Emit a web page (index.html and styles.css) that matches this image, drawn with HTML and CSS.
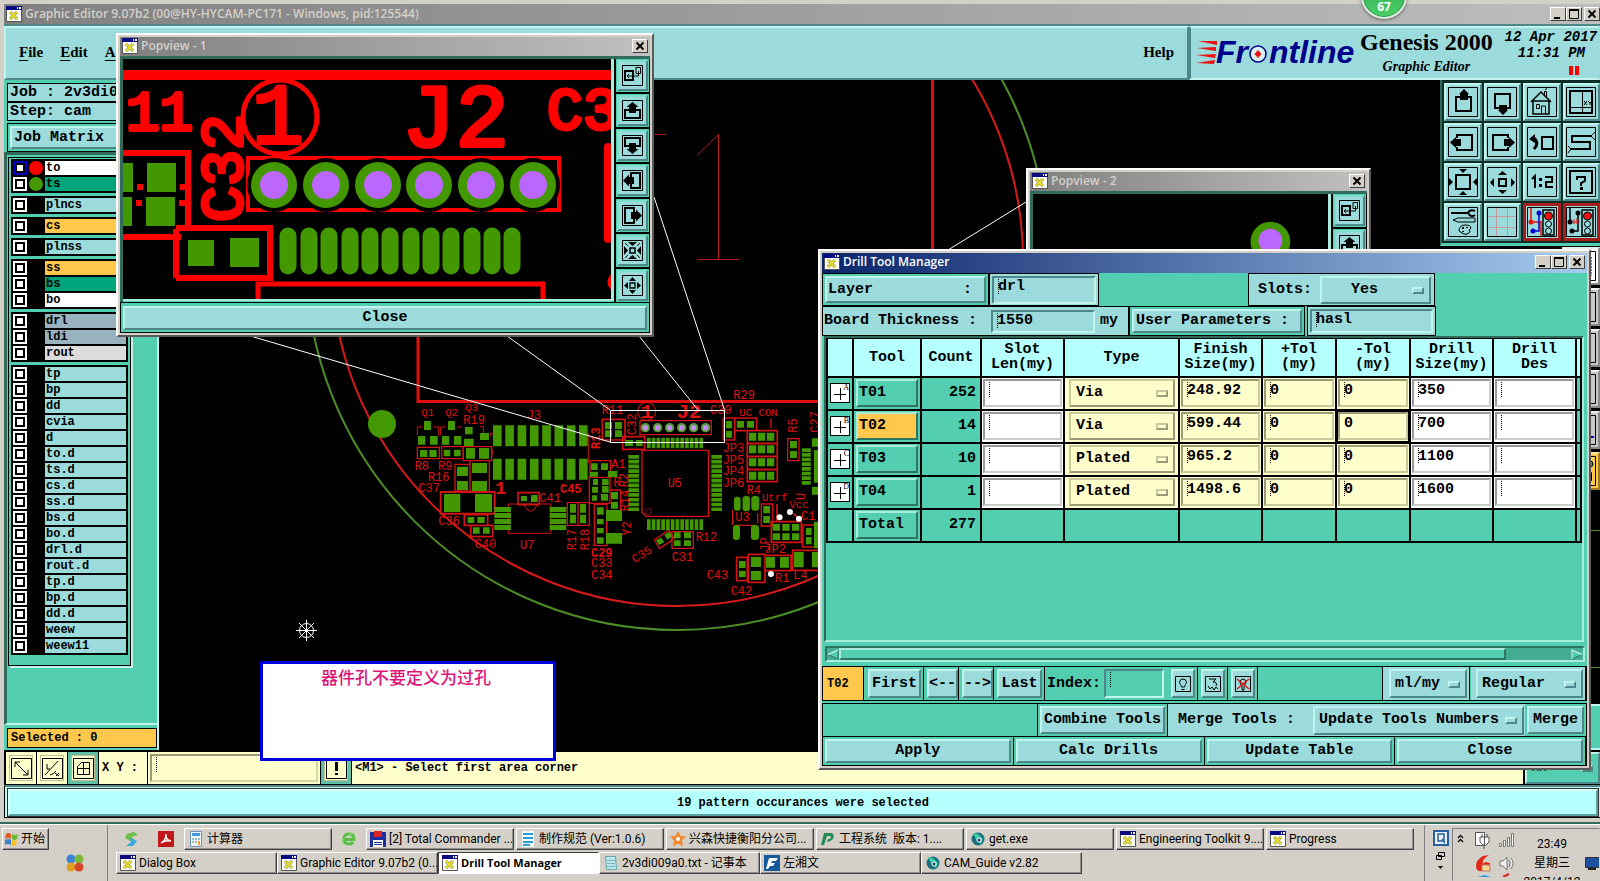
FILE: index.html
```html
<!DOCTYPE html>
<html lang="en">
<head>
<meta charset="utf-8">
<title>Graphic Editor 9.07b2</title>
<link rel="stylesheet" href="styles.css">
</head>
<body>
<svg class="defs" aria-hidden="true">
  <symbol id="xicon" viewBox="0 0 16 16"><path fill="#fff" stroke="#555" d="M.5.5h15v15H.5z"/><path fill="#0a0a80" d="M0 0h16v4H0z"/><path fill="#fff" d="M11 1h1v2h-1zM13 1h2v2h-2z"/><path stroke="#777" stroke-width="3" d="M4 6l7 7M11 6l-7 7"/><path stroke="#e8e020" stroke-width="2" d="M4 6l7 7M11 6l-7 7"/></symbol>
  <symbol id="w-min" viewBox="0 0 12 10"><path fill="#000" d="M2 8h6v2H2z"/></symbol>
  <symbol id="w-max" viewBox="0 0 12 10"><path fill="none" stroke="#000" d="M1.500 1.500h9v8h-9z"/><path fill="#000" d="M1 0h10v2H1z"/></symbol>
  <symbol id="w-close" viewBox="0 0 12 10"><path stroke="#000" stroke-width="2" d="M2.500 1.500l7 7M9.500 1.500l-7 7"/></symbol>

  <symbol id="s-swap" viewBox="0 0 21 21"><g fill="none" stroke="#000"><path d="M.5.5h20v20H.5z"/><path stroke-width="2" d="M3 6h8v9H3z"/><path d="M14 2.500h4.500v6H14zM16.500 6v5H5M7 9l-2 2 2 2"/></g></symbol>
  <symbol id="s-up" viewBox="0 0 21 21"><path fill="none" stroke="#000" d="M.5.5h20v20H.5z"/><path fill="none" stroke="#000" stroke-width="2" d="M7 10H3v8h15v-8h-4"/><path d="M10.500 2l6 5h-2.500v6H7V7H4.500z"/></symbol>
  <symbol id="s-down" viewBox="0 0 21 21"><use href="#s-up" transform="rotate(180 10.500 10.500)"/></symbol>
  <symbol id="s-left" viewBox="0 0 21 21"><path fill="none" stroke="#000" d="M.5.5h20v20H.5z"/><path fill="none" stroke="#000" stroke-width="2" d="M9 7V3h9v15H9v-4"/><path d="M1 10.500l6-6v2.500h5v7H7v2.500z"/></symbol>
  <symbol id="s-right" viewBox="0 0 21 21"><use href="#s-left" transform="rotate(180 10.500 10.500)"/></symbol>
  <symbol id="s-in" viewBox="0 0 21 21"><path fill="none" stroke="#000" d="M.5.5h20v20H.5z"/><path fill="none" stroke="#000" stroke-width="1.500" d="M8 8h5v5H8z"/><path d="M6 2h9l-4.500 4zM6 19h9l-4.500-4zM2 6v9l4-4.500zM19 6v9l-4-4.500z"/><path stroke="#000" d="M3 3l3 3M18 3l-3 3M3 18l3-3M18 18l-3-3"/></symbol>
  <symbol id="s-out" viewBox="0 0 21 21"><path fill="none" stroke="#000" d="M.5.5h20v20H.5z"/><path fill="none" stroke="#000" stroke-width="1.300" d="M8 8h5v5H8z"/><path d="M7 6h7l-3.500-4zM7 15h7l-3.500 4zM6 7v7l-4-3.500zM15 7v7l4-3.500z"/></symbol>

  <symbol id="b-up" viewBox="0 0 30 30"><path fill="none" stroke="#000" d="M.5.5h29v29H.5z"/><path fill="none" stroke="#000" stroke-width="2" d="M13 10H8v14h15V10h-4"/><path d="M16 2l5 5h-1v6h-8V7h-1z"/></symbol>
  <symbol id="b-down" viewBox="0 0 30 30"><path fill="none" stroke="#000" d="M.5.5h29v29H.5z"/><path fill="none" stroke="#000" stroke-width="2" d="M13 21H8V7h15v14h-4"/><path d="M16 28l5-5h-1v-5h-8v5h-1z"/></symbol>
  <symbol id="b-home" viewBox="0 0 30 30"><path fill="none" stroke="#000" d="M.5.5h29v29H.5z"/><path fill="none" stroke="#000" stroke-width="1.500" d="M4 15L14 5l10 10M6 14v13h16V14H6"/><path fill="none" stroke="#000" d="M14.500 27v-8h4v8M9.500 17.500h3v4h-3zM17.500 8V4.500h2V10M18 3l2-2"/></symbol>
  <symbol id="b-xy" viewBox="0 0 30 30"><path fill="none" stroke="#000" d="M.5.5h29v29H.5z"/><path fill="none" stroke="#000" stroke-width="2" d="M4 4h22v22H4z"/><path fill="none" stroke="#000" d="M16.500 4v22M4 20.500h22M18 14l3 4M21 14l-3 4M22 14l2 2 2-2M24 16v2"/></symbol>
  <symbol id="b-left" viewBox="0 0 30 30"><path fill="none" stroke="#000" d="M.5.5h29v29H.5z"/><path fill="none" stroke="#000" stroke-width="2" d="M9 11V8h15v15H9v-3"/><path d="M2 15.500l6-5.500v2h5v7H8v2z"/></symbol>
  <symbol id="b-right" viewBox="0 0 30 30"><path fill="none" stroke="#000" d="M.5.5h29v29H.5z"/><path fill="none" stroke="#000" stroke-width="2" d="M21 11V8H6v15h15v-3"/><path d="M28 15.500l-6-5.500v2h-5v7h5v2z"/></symbol>
  <symbol id="b-undo" viewBox="0 0 30 30"><path fill="none" stroke="#000" d="M.5.5h29v29H.5z"/><path fill="none" stroke="#000" stroke-width="2" d="M15 10h11v12H15z"/><path fill="none" stroke="#000" stroke-width="3" d="M5 12h3q4 5-1 10"/><path d="M2 12l6-5v9z"/></symbol>
  <symbol id="b-snake" viewBox="0 0 30 30"><path fill="none" stroke="#000" d="M.5.5h29v29H.5z"/><path fill="none" stroke="#000" stroke-width="2" d="M26 9H6v6h18v7H5"/><path fill="none" stroke="#000" d="M25 9l4-4M25 9l4 4M5 22l-3-3M5 22l-3 4"/></symbol>
  <symbol id="b-in" viewBox="0 0 30 30"><path fill="none" stroke="#000" d="M.5.5h29v29H.5z"/><path fill="none" stroke="#000" stroke-width="2" d="M8 8h14v14H8z"/><path d="M11 2h8l-4 4zM11 28h8l-4-4zM1 11v8l4-4zM29 11v8l-4-4z"/></symbol>
  <symbol id="b-out" viewBox="0 0 30 30"><path fill="none" stroke="#000" d="M.5.5h29v29H.5z"/><path fill="none" stroke="#000" stroke-width="2" d="M12 12h7v7h-7z"/><path d="M11 8h9l-4.500-4zM11 23h9l-4.500 4zM7 11v9l-4-4.500zM24 11v9l4-4.500z"/></symbol>
  <symbol id="b-half" viewBox="0 0 30 30"><path fill="none" stroke="#000" d="M.5.5h29v29H.5z"/><path fill="none" stroke="#000" stroke-width="2" d="M5 12l3-3v12M18 10h7v5h-6v5h7"/><path d="M12 11h3v3h-3zM12 17h3v3h-3z"/></symbol>
  <symbol id="b-help" viewBox="0 0 30 30"><path fill="none" stroke="#000" d="M.5.5h29v29H.5z"/><path fill="none" stroke="#000" stroke-width="2" d="M4 4h22v22H4zM11 13v-3h8v4l-4 2v3"/><path d="M14 20h3v3h-3z"/></symbol>
  <symbol id="b-tools" viewBox="0 0 30 30"><path fill="none" stroke="#000" d="M.5.5h29v29H.5z"/><path fill="none" stroke="#000" stroke-width="2" d="M3 6h16M27 4q-5-2-7 2 3 5 7 2"/><path fill="none" stroke="#000" d="M5 13l5-2h17v4H10zM11 24q0-6 6-6t6 3q-3 2-1 4-4 4-8 1z"/><path d="M14 20h2v2h-2zM18 20h2v1h-2zM14 24h2v1h-2z"/></symbol>
  <symbol id="b-grid" viewBox="0 0 30 30"><path fill="none" stroke="#000" d="M.5.5h29v29H.5z"/><path stroke="#c69a9f" d="M9.500 1v28M20.500 1v28M1 9.500h28M1 20.500h28"/></symbol>
  <symbol id="b-net1" viewBox="0 0 30 30"><path fill="none" stroke="#000" d="M.5.5h29v29H.5z"/><path fill="none" stroke="#e11" stroke-width="1.500" d="M4 1v14h10v14"/><path fill="none" stroke="#00d" stroke-width="1.500" d="M12 6v18H6"/><circle cx="12" cy="6" r="2.500" fill="#00d"/><circle cx="6" cy="24" r="2.500" fill="#00d"/><circle cx="4" cy="15" r="2.500" fill="#e11"/><path fill="#9bdbdb" stroke="#000" stroke-width="1.500" d="M16 3h11v25H16z"/><circle cx="21.500" cy="9" r="4" fill="#e11" stroke="#000"/><circle cx="21.500" cy="17" r="3" fill="none" stroke="#000"/><circle cx="21.500" cy="24" r="3" fill="none" stroke="#000"/></symbol>
  <symbol id="b-net2" viewBox="0 0 30 30"><path fill="none" stroke="#000" d="M.5.5h29v29H.5z"/><path fill="none" stroke="#000" stroke-width="1.500" d="M4 1v14M12 6v18H6"/><path fill="none" stroke="#e11" d="M4 15h10M8 12v5M11 11v6"/><circle cx="12" cy="6" r="2.500"/><circle cx="6" cy="24" r="2.500"/><circle cx="4" cy="15" r="2.500"/><path fill="#9bdbdb" stroke="#000" stroke-width="1.500" d="M16 3h11v25H16z"/><circle cx="21.500" cy="9" r="4" fill="#e11" stroke="#000"/><circle cx="21.500" cy="17" r="3" fill="none" stroke="#000"/><circle cx="21.500" cy="24" r="3" fill="none" stroke="#000"/></symbol>
  <symbol id="gecko" viewBox="0 0 16 16"><circle cx="8" cy="8" r="6.500" fill="#1b6f7c"/><path fill="#3ad0a8" d="M3 2l5 1 5 5-2 5-4-3z"/><circle cx="9" cy="9" r="2.500" fill="#eee"/><circle cx="9" cy="9" r="1.500" fill="#147"/></symbol>
</svg>

<main class="editor">
  <div class="titlebar idle">
    <svg class="ico16"><use href="#xicon"/></svg>
    <h1>Graphic Editor 9.07b2 (00@HY-HYCAM-PC171 - Windows, pid:125544)</h1>
    <button class="wbtn" aria-label="Minimize"><svg><use href="#w-min"/></svg></button>
    <button class="wbtn" aria-label="Maximize"><svg><use href="#w-max"/></svg></button>
    <button class="wbtn last" aria-label="Close"><svg><use href="#w-close"/></svg></button>
  </div>

  <header class="head">
    <nav class="menu">
      <button><u>F</u>ile</button><button><u>E</u>dit</button><button><u>A</u>ctions</button>
      <button class="help">Help</button>
    </nav>
    <div class="brand">
      <svg class="logo" viewBox="0 -8 160 44" role="img" aria-label="Frontline">
        <path fill="#e11" d="M2 3l19 0v4zM1 10l19-1v4zM0 17l20-1-1 4zM0 25l19-3-1 4z"/>
        <g fill="#00008b"><text x="20" y="25">Fr</text><text x="73" y="25">ntline</text></g>
        <circle cx="62" cy="16" r="8" fill="#d8f2f2" stroke="#00008b" stroke-width="1.500"/>
        <path fill="#e11" d="M62 12l3.500 4-3.500 4-3.500-4z"/>
      </svg>
      <div class="product"><strong>Genesis 2000</strong><em>Graphic Editor</em></div>
      <div class="clock"><span>12 Apr 2017</span><span class="hour">11:31 PM</span><svg class="pause" viewBox="0 0 10 9"><path fill="#f00" d="M0 0h4v9H0zM6 0h4v9H6z"/></svg></div>
    </div>
  </header>

  <section class="work">
    <svg class="board" viewBox="4 80 1596 673" preserveAspectRatio="xMinYMin slice" role="img" aria-label="Board layout">
      <g fill="none">
        <circle cx="677" cy="259" r="371" stroke="#4d8f26" stroke-width="2"/>
        <circle cx="677" cy="260" r="346" stroke="#d81a1a" stroke-width="2"/>
        <path stroke="#e01010" stroke-width="3" d="M418 80V401.500H932.500V80"/>
        <path stroke="#b81818" d="M697 155.500l21.500-21V259M697 259.500h42M655 134.500h11"/>
        <path stroke="#4d8f26" d="M1560 530.500h40M1560 667.500h40"/>
      </g>
      <circle cx="382" cy="424" r="14" fill="#439800"/>

      <g transform="translate(400 370) scale(.3333)">
        <g fill="none" stroke="#d01414" stroke-width="4">
          <path d="M52 232h66v34H52zM125 230h64v36h-64zM190 230h85v42h-85zM165 283h45v80h-45zM210 272h58v95h-58z"/>
          <path d="M52 195v-24h16M100 171h16v26M122 195v-24h16M172 171h14M131 212h12M272 200v-10h10M240 170h10v20M565 190v90M272 235q12 12 0 26" stroke-width="3"/>
          <path stroke-width="6" d="M122 366h162v65H122z"/>
          <path stroke-width="5" d="M354 368h64v36h-64zM193 434h70v32h-70zM212 466h66v34h-66z"/>
          <path stroke-width="3" d="M325 402h128M325 402v88h128v-88M370 402q22 44 44 0"/>
          <path d="M502 398h66v68h-66zM534 398v68M583 403h38v124h-38zM570 272h62v50h-62zM568 322h62v78h-62zM632 360h30v60M620 455v36h12"/>
          <path stroke-width="5" d="M607 148h68v62h-68zM668 200h66v38h-66z"/>
          <path stroke-width="4" d="M720 152h214v42H720z"/>
          <path d="M726 241h200v198H738l-12-12z"/>
          <circle cx="746" cy="425" r="9" stroke-width="2"/>
          <path stroke-width="5" d="M970 144h34v66h-34zM1004 144h66v38h-66zM1042 182h90v38h-90zM1042 221h90v38h-90zM1042 260h90v38h-90zM1042 299h90v36h-90z"/>
          <path d="M1163 206h34v66h-34zM1084 402h34v66h-34zM816 485h64v50h-64zM763 510l44-30 16 26-44 30zM1113 146v28M998 420v46M1008 466h60M1073 430v30"/>
          <path stroke-width="5" d="M1114 455h90v62h-90zM1208 465h50v66h-50zM1010 562h32v70h-32zM1045 553h50v84h-50zM1095 556h78v46h-78zM1178 541h80v60h-80zM1131 402v50M1180 430l20 20"/>
        </g>
        <g fill="#439800">
          <path d="M72 153h21v27H72zM144 153h21v27h-21zM54 198h22v26H54zM90 198h23v26H90zM126 198h22v26h-22zM162 198h22v26h-22zM195 171h23v22h-23zM192 206h29v22h-29zM240 189h27v21h-27z"/>
          <path d="M60 240h22v21H60zM88 240h22v21H88zM131 239h20v20h-20zM162 239h20v20h-20zM198 234h27v32h-27zM237 234h30v32h-30zM171 290h33v28h-33zM171 333h33v27h-33zM216 279h45v30h-45zM216 333h45v30h-45z"/>
          <path d="M132 372h49v54h-49zM225 372h51v54h-51zM363 378h18v16h-18zM393 375h20v21h-20zM203 441h20v18h-20zM232 441h22v18h-22zM219 472h20v19h-20zM249 472h20v19h-20z"/>
          <path d="M510 402h18v26h-18zM510 434h18v26h-18zM540 402h18v26h-18zM540 434h18v26h-18zM591 412h20v22h-20zM591 447h20v16h-20zM591 474h20v16h-20zM591 502h20v19h-20zM618 420h48v33h-48zM618 489h48v32h-48z"/>
          <path d="M573 280h20v20h-20zM603 280h21v20h-21zM570 305h24v15h-24zM624 303h28v18h-28zM579 327h15v18h-15zM606 327h20v18h-20zM576 350h18v18h-18zM606 348h20v20h-20zM576 376h15v16h-15zM603 372h21v20h-21zM633 366h21v22h-21zM633 395h21v21h-21z"/>
          <path d="M615 156h21v21h-21zM645 156h21v21h-21zM615 181h21v20h-21zM645 181h21v20h-21zM675 210h24v18h-24zM708 210h20v18h-20zM978 153h18v22h-18zM978 183h18v20h-18zM1011 153h21v20h-21zM1041 153h21v20h-21z"/>
          <path d="M1170 213h21v22h-21zM1170 243h21v21h-21zM1090 408h20v22h-20zM1090 438h20v21h-20zM822 487h20v18h-20zM852 487h21v18h-21zM822 511h20v17h-20zM852 511h21v17h-21zM768 511l16-8 9 14-16 8zM793 494l15-9 9 14-15 10z"/>
          <path d="M1017 573h20v21h-20zM1017 603h20v18h-20zM1053 561h30v30h-30zM1053 603h30v27h-30zM1098 561h27v32h-27zM1140 561h27v32h-27zM1182 546h29v46h-29zM1236 546h20v46h-20zM1218 474h17v21h-17zM1218 501h17v22h-17zM1242 455h14v80h-14zM1242 240h14v98h-14zM1236 205h20v25h-20zM1236 350h20v24h-20z"/>
          <rect x="1002" y="380" width="20" height="42" rx="9"/><rect x="1028" y="378" width="22" height="46" rx="10"/><rect x="1054" y="378" width="24" height="44" rx="10"/><rect x="999" y="465" width="21" height="45" rx="9"/><rect x="1053" y="465" width="24" height="45" rx="9"/>
        </g>
        <g fill="none" stroke="#439800">
          <path stroke-width="63" stroke-dasharray="26 10.900" d="M279 197H563M279 298H563"/>
          <path stroke-width="50" stroke-dasharray="15 3" d="M308 411v72M474 411v72"/>
          <path stroke-width="32" stroke-dasharray="11 3.300" d="M741 219h170M741 464h170M701 255v172M950 255v172"/>
          <path stroke-width="24" stroke-dasharray="22 5" d="M1047 200h78M1047 238h78M1047 277h78M1047 317h78"/>
          <path stroke-width="20" stroke-dasharray="22 7" d="M1118 472h82M1118 500h82"/>
          <path stroke-width="27" stroke-dasharray="11 3" d="M1219 235v112"/>
        </g>
        <g class="silk">
          <text x="64" y="137" class="n">Q1</text><text x="136" y="137" class="n">Q2</text><text x="196" y="123" class="n">Q3</text>
          <text x="190" y="163">R19</text><text x="380" y="147">J3</text><text x="605" y="133">R11</text><text x="930" y="133">C30</text><text x="1000" y="86">R29</text>
          <text x="1018" y="137" class="n">UC CON</text><text x="44" y="300">R8</text><text x="114" y="300">R9</text><text x="84" y="333">R16</text><text x="55" y="367">C37</text>
          <text x="480" y="369" class="b">C45</text><text x="418" y="396">C41</text><text x="115" y="465">C36</text><text x="224" y="535">C40</text><text x="360" y="538">U7</text>
          <text x="573" y="560" class="b">C29</text><text x="573" y="592">C33</text><text x="573" y="627">C34</text><text x="815" y="572">C31</text><text x="887" y="512">R12</text><text x="803" y="352">U5</text>
          <text x="968" y="247">JP3</text><text x="968" y="281">JP5</text><text x="968" y="315">JP4</text><text x="968" y="350">JP6</text><text x="1040" y="373">R4</text>
          <text x="1086" y="392" class="n">Utrf</text><text x="1168" y="413" class="n">Vcc</text><text x="1203" y="449">C1</text><text x="1006" y="453">U3</text><text x="1093" y="548">JP2</text>
          <text x="920" y="627">C43</text><text x="992" y="675">C42</text><text x="1125" y="636">R1</text><text x="1180" y="628">L4</text><text x="634" y="293">A1</text><text x="640" y="347">R</text>
          <text transform="translate(527 541) rotate(-90)">R17</text><text transform="translate(567 541) rotate(-90)">R18</text><text transform="translate(692 497) rotate(-90)">Y2</text>
          <text class="b" transform="translate(600 237) rotate(-90)">R13</text><text transform="translate(708 195) rotate(-90)">C32</text><text transform="translate(1192 188) rotate(-90)">R5</text>
          <text transform="translate(1256 188) rotate(-90)">C27</text><text transform="translate(687 424) rotate(-90)">R14</text><text transform="translate(685 352) rotate(-90)">R2</text><text transform="translate(1216 390) rotate(-90)">U</text>
          <text transform="translate(704 580) rotate(-32)">C35</text><text transform="translate(1106 545) rotate(-90)">JP</text>
          <text x="286" y="372" class="m">1</text><text x="830" y="143" class="l">J2</text><text x="722" y="143" class="l">1</text>
        </g>
        <circle cx="740" cy="124" r="27" fill="none" stroke="#e11" stroke-width="3"/>
        <g fill="#c28cff" stroke="#5b9a35" stroke-width="6"><circle cx="736" cy="173" r="11"/><circle cx="773" cy="173" r="11"/><circle cx="809" cy="173" r="11"/><circle cx="845" cy="173" r="11"/><circle cx="881" cy="173" r="11"/><circle cx="917" cy="173" r="11"/></g>
        <g fill="#fff"><circle cx="1139" cy="442" r="9"/><circle cx="1170" cy="426" r="9"/><circle cx="1197" cy="446" r="9"/><circle cx="1113" cy="612" r="9"/></g>
      </g>
      <g fill="none" stroke="#fff">
        <path d="M654 197L724.500 410M639 336L698 410M507 336L610 410M247 335L610 442M610.500 410.500h114v32h-114zM1026 202L948 250"/>
        <path d="M296 630.500h21M306.500 620v21M299 623l15 15M314 623l-15 15"/><circle cx="306.500" cy="630.500" r="7"/>
      </g>
    </svg>

    <aside class="side">
      <div class="jobinfo"><p>Job : 2v3di009a0</p><p>Step: cam</p></div>
      <div class="cell"><button class="btn matrix">Job Matrix</button></div>
      <div class="layerbox"><div class="layers">
        <div class="group">
          <label class="w"><input type="checkbox" class="cur"><i class="dot r"></i><span>to</span></label>
          <label class="g"><input type="checkbox"><i class="dot gr"></i><span>ts</span></label>
        </div>
        <div class="group"><label><input type="checkbox"><i></i><span>plncs</span></label></div>
        <div class="group"><label class="o"><input type="checkbox"><i></i><span>cs</span></label></div>
        <div class="group"><label><input type="checkbox"><i></i><span>plnss</span></label></div>
        <div class="group">
          <label class="o"><input type="checkbox"><i></i><span>ss</span></label>
          <label class="g"><input type="checkbox"><i></i><span>bs</span></label>
          <label class="w"><input type="checkbox"><i></i><span>bo</span></label>
        </div>
        <div class="group">
          <label class="s"><input type="checkbox"><i></i><span>drl</span></label>
          <label class="s"><input type="checkbox"><i></i><span>ldi</span></label>
          <label class="l"><input type="checkbox"><i></i><span>rout</span></label>
        </div>
        <div class="group">
          <label><input type="checkbox"><i></i><span>tp</span></label>
          <label><input type="checkbox"><i></i><span>bp</span></label>
          <label><input type="checkbox"><i></i><span>dd</span></label>
          <label><input type="checkbox"><i></i><span>cvia</span></label>
          <label><input type="checkbox"><i></i><span>d</span></label>
          <label><input type="checkbox"><i></i><span>to.d</span></label>
          <label><input type="checkbox"><i></i><span>ts.d</span></label>
          <label><input type="checkbox"><i></i><span>cs.d</span></label>
          <label><input type="checkbox"><i></i><span>ss.d</span></label>
          <label><input type="checkbox"><i></i><span>bs.d</span></label>
          <label><input type="checkbox"><i></i><span>bo.d</span></label>
          <label><input type="checkbox"><i></i><span>drl.d</span></label>
          <label><input type="checkbox"><i></i><span>rout.d</span></label>
          <label><input type="checkbox"><i></i><span>tp.d</span></label>
          <label><input type="checkbox"><i></i><span>bp.d</span></label>
          <label><input type="checkbox"><i></i><span>dd.d</span></label>
          <label><input type="checkbox"><i></i><span>weew</span></label>
          <label><input type="checkbox"><i></i><span>weew11</span></label>
        </div>
      </div></div>
      <p class="selected">Selected : 0</p>
    </aside>

    <aside class="tools">
      <div class="toolgrid">
        <button aria-label="Pan up"><svg><use href="#b-up"/></svg></button><button aria-label="Pan down"><svg><use href="#b-down"/></svg></button><button aria-label="Home"><svg><use href="#b-home"/></svg></button><button aria-label="Coordinates"><svg><use href="#b-xy"/></svg></button>
        <button aria-label="Pan left"><svg><use href="#b-left"/></svg></button><button aria-label="Pan right"><svg><use href="#b-right"/></svg></button><button aria-label="Previous view"><svg><use href="#b-undo"/></svg></button><button aria-label="Serpentine"><svg><use href="#b-snake"/></svg></button>
        <button aria-label="Zoom in"><svg><use href="#b-in"/></svg></button><button aria-label="Zoom out"><svg><use href="#b-out"/></svg></button><button aria-label="Scale 1:2"><svg><use href="#b-half"/></svg></button><button aria-label="Help"><svg><use href="#b-help"/></svg></button>
        <button aria-label="Setup"><svg><use href="#b-tools"/></svg></button><button aria-label="Grid"><svg><use href="#b-grid"/></svg></button><button class="hot" aria-label="Nets on"><svg><use href="#b-net1"/></svg></button><button class="hot" aria-label="Nets off"><svg><use href="#b-net2"/></svg></button>
      </div>
      <div class="toolcol">
        <button class="wh" aria-label="Select"><svg viewBox="0 0 30 30"><path fill="none" stroke="#000" d="M.5.5h29v29H.5z"/><path fill="none" stroke="#000" stroke-dasharray="2 1" d="M5 5h20v20H5z"/></svg></button>
        <button aria-label="Add"><svg viewBox="0 0 30 30"><path fill="none" stroke="#000" d="M.5.5h29v29H.5z"/><circle cx="20" cy="10" r="5" fill="#e11"/></svg></button>
        <button aria-label="Copy"><svg viewBox="0 0 30 30"><path fill="none" stroke="#000" d="M.5.5h29v29H.5z"/><path fill="#e11" d="M5 10h20v3H5zM5 18h20v3H5z"/></svg></button>
        <button aria-label="Move"><svg viewBox="0 0 30 30"><path fill="none" stroke="#000" d="M.5.5h29v29H.5z"/><path fill="#00c" d="M10 14h14v12H10z"/></svg></button>
        <button aria-label="Mirror"><svg viewBox="0 0 30 30"><path fill="none" stroke="#000" d="M.5.5h29v29H.5z"/><path fill="#00c" d="M14 21h14v2H14zM20 17l-4 5 4 4z"/></svg></button>
        <button class="or" aria-label="Query"><svg viewBox="0 0 30 30"><path fill="none" stroke="#000" d="M.5.5h29v29H.5z"/><circle cx="24" cy="8" r="3" fill="#3a3" stroke="#000"/><path d="M20 20l6-4v10l-2-4z"/></svg></button>
      </div>
      <div class="corner"></div>
    </aside>
  </section>

  <div class="cmd">
    <button class="cbtn" aria-label="Absolute"><svg viewBox="0 0 21 21"><path fill="none" stroke="#000" d="M.5.5h20v20H.5zM4 4l13 13M4 9V4h5M17 12v5h-5"/></svg></button>
    <button class="cbtn" aria-label="Relative"><svg viewBox="0 0 21 21"><path fill="none" stroke="#000" d="M.5.5h20v20H.5zM3 17L16 3M5 6v5h3M8 17q4-1 6-4M13 15l4 3M17 15l-3 3"/></svg></button>
    <button class="cbtn on" aria-label="Snap grid"><svg viewBox="0 0 21 21"><path fill="none" stroke="#000" d="M.5.5h20v20H.5zM4.500 8.500l4-4h8v12h-12zM10.500 4v13M4 10.500h13"/></svg></button>
    <label class="xy" for="xy">X Y :</label>
    <span class="xyin"><input id="xy" class="tin"></span>
    <button class="cbtn on bang" aria-label="Execute"><svg viewBox="0 0 21 21"><path fill="none" stroke="#000" d="M.5.5h20v20H.5z"/><path d="M9 4h3v9H9zM9 15h3v2H9z"/></svg></button>
    <p class="msg">&lt;M1&gt; - Select first area corner</p>
    <span class="unit sel"><select aria-label="Units"><option>MM</option></select></span>
  </div>
  <div class="status"><p>19 pattern occurances were selected</p></div>
</main>

<section class="win pop1">
  <div class="titlebar idle light"><svg class="ico16"><use href="#xicon"/></svg><h2>Popview - 1</h2><button class="wbtn" aria-label="Close"><svg><use href="#w-close"/></svg></button></div>
  <div class="popbody">
    <svg class="view" viewBox="123 59 488 242" preserveAspectRatio="xMinYMin slice" role="img" aria-label="Magnified view of J2">
      <rect x="123" y="70" width="488" height="10" fill="red"/>
      <g class="big">
        <text x="126" y="130" font-size="56">11</text><text x="252" y="143" font-size="86">1</text>
        <text x="402" y="146" font-size="89">J2</text><text x="547" y="129" font-size="60">C3</text>
        <text transform="translate(242 222) rotate(-90)" font-size="60">C32</text>
      </g>
      <g fill="none" stroke="red">
        <circle cx="280" cy="117" r="37" stroke-width="5"/>
        <path stroke-width="6" d="M123 153h65v78M123 237h58M176 229v49M176 278h94v-50h-94"/>
        <path stroke-width="5" d="M258 300v-16h285v16"/>
        <path stroke-width="4" d="M248 158h311v52H248z"/>
        <path stroke-width="8" stroke-linecap="round" d="M608 147v92"/><path stroke-width="4" d="M612 276q-5 6 0 12"/>
      </g>
      <path fill="red" d="M137 184h6v6h-6zM136 200h6v6h-6zM180 184h6v6h-6zM179 200h6v6h-6z"/>
      <path fill="#439800" d="M123 163h10v29h-10zM147 163h29v29h-29zM123 197h9v29h-9zM146 197h29v29h-29zM188 240h26v26h-26zM230 238h29v29h-29z"/>
      <g fill="#439800" stroke="#000" stroke-width="4"><circle cx="274" cy="185" r="25"/><circle cx="326" cy="185" r="25"/><circle cx="378" cy="185" r="25"/><circle cx="429" cy="185" r="25"/><circle cx="481" cy="185" r="25"/><circle cx="533" cy="185" r="25"/></g>
      <g fill="#bb66ff"><circle cx="274" cy="185" r="14"/><circle cx="326" cy="185" r="14"/><circle cx="378" cy="185" r="14"/><circle cx="429" cy="185" r="14"/><circle cx="481" cy="185" r="14"/><circle cx="533" cy="185" r="14"/></g>
      <path stroke="#439800" stroke-width="17" stroke-linecap="round" d="M288 236v30M309 236v30M329 236v30M350 236v30M370 236v30M390 236v30M411 236v30M431 236v30M451 236v30M472 236v30M492 236v30M512 236v30"/>
    </svg>
    <div class="poptools">
      <button aria-label="Swap view"><svg><use href="#s-swap"/></svg></button><button aria-label="Pan up"><svg><use href="#s-up"/></svg></button><button aria-label="Pan down"><svg><use href="#s-down"/></svg></button><button aria-label="Pan left"><svg><use href="#s-left"/></svg></button><button aria-label="Pan right"><svg><use href="#s-right"/></svg></button><button aria-label="Zoom in"><svg><use href="#s-in"/></svg></button><button aria-label="Zoom out"><svg><use href="#s-out"/></svg></button>
    </div>
  </div>
  <div class="cell"><button class="btn">Close</button></div>
</section>

<section class="win pop2">
  <div class="titlebar idle light"><svg class="ico16"><use href="#xicon"/></svg><h2>Popview - 2</h2><button class="wbtn" aria-label="Close"><svg><use href="#w-close"/></svg></button></div>
  <div class="popbody">
    <svg class="view" viewBox="1032 195 297 200" preserveAspectRatio="xMinYMin slice" role="img" aria-label="Magnified pad"><circle cx="1271" cy="243" r="20" fill="#439800"/><circle cx="1271" cy="242" r="12" fill="#bb66ff"/></svg>
    <div class="poptools"><button aria-label="Swap view"><svg><use href="#s-swap"/></svg></button><button aria-label="Pan up"><svg><use href="#s-up"/></svg></button><button aria-label="Pan down"><svg><use href="#s-down"/></svg></button></div>
  </div>
</section>

<section class="win drill">
  <div class="titlebar active"><svg class="ico16"><use href="#xicon"/></svg><h2>Drill Tool Manager</h2>
    <button class="wbtn" aria-label="Minimize"><svg><use href="#w-min"/></svg></button><button class="wbtn" aria-label="Maximize"><svg><use href="#w-max"/></svg></button><button class="wbtn last" aria-label="Close"><svg><use href="#w-close"/></svg></button></div>
  <div class="form">
    <div class="frow">
      <div class="cell layer"><button class="btn between"><span>Layer</span><span>:</span></button></div>
      <div class="pcell fld1"><input class="tin" aria-label="Layer" value="drl"></div>
      <div class="pcell slots"><label for="slots">Slots:</label><span class="sel"><select id="slots"><option>Yes</option><option>No</option></select></span></div>
    </div>
    <div class="frow r2">
      <div class="pcell thick"><label for="bt">Board Thickness :</label><input id="bt" class="tin" value="1550"><span>my</span></div>
      <div class="cell params"><button class="btn">User Parameters :</button></div>
      <div class="pcell fld2"><input class="tin" aria-label="User Parameters" value="hasl"></div>
    </div>
  </div>
  <div class="tablebox">
    <table>
      <colgroup><col class="c0"><col class="c1"><col class="c2"><col class="c3"><col class="c4"><col class="c3"><col class="c5"><col class="c5"><col class="c3"><col class="c3"><col></colgroup>
      <thead><tr><th></th><th>Tool</th><th>Count</th><th>Slot<br>Len(my)</th><th>Type</th><th>Finish<br>Size(my)</th><th>+Tol<br>(my)</th><th>-Tol<br>(my)</th><th>Drill<br>Size(my)</th><th>Drill<br>Des</th><th></th></tr></thead>
      <tbody>
        <tr><td><span class="mark">A</span></td><td><button class="tbtn">T01</button></td><td class="num">252</td><td class="wt"><input class="tin" aria-label="Slot length T01"></td><td class="ye"><span class="sel"><select aria-label="Type T01"><option>Via</option></select></span></td><td class="ye"><input class="tin" aria-label="Finish T01" value="248.92"></td><td class="ye"><input class="tin" aria-label="Plus T01" value="0"></td><td class="ye"><input class="tin" aria-label="Minus T01" value="0"></td><td class="wt"><input class="tin" aria-label="Drill T01" value="350"></td><td class="wt"><input class="tin" aria-label="Des T01"></td><td></td></tr>
        <tr><td><span class="mark">B</span></td><td><button class="tbtn cur">T02</button></td><td class="num">14</td><td class="wt"><input class="tin" aria-label="Slot length T02"></td><td class="ye"><span class="sel"><select aria-label="Type T02"><option>Via</option></select></span></td><td class="ye"><input class="tin" aria-label="Finish T02" value="599.44"></td><td class="ye"><input class="tin" aria-label="Plus T02" value="0"></td><td class="ye focus"><input class="tin" aria-label="Minus T02" value="0"></td><td class="wt"><input class="tin" aria-label="Drill T02" value="700"></td><td class="wt"><input class="tin" aria-label="Des T02"></td><td></td></tr>
        <tr><td><span class="mark">C</span></td><td><button class="tbtn">T03</button></td><td class="num">10</td><td class="wt"><input class="tin" aria-label="Slot length T03"></td><td class="ye"><span class="sel"><select aria-label="Type T03"><option>Plated</option></select></span></td><td class="ye"><input class="tin" aria-label="Finish T03" value="965.2"></td><td class="ye"><input class="tin" aria-label="Plus T03" value="0"></td><td class="ye"><input class="tin" aria-label="Minus T03" value="0"></td><td class="wt"><input class="tin" aria-label="Drill T03" value="1100"></td><td class="wt"><input class="tin" aria-label="Des T03"></td><td></td></tr>
        <tr><td><span class="mark">D</span></td><td><button class="tbtn">T04</button></td><td class="num">1</td><td class="wt"><input class="tin" aria-label="Slot length T04"></td><td class="ye"><span class="sel"><select aria-label="Type T04"><option>Plated</option></select></span></td><td class="ye"><input class="tin" aria-label="Finish T04" value="1498.6"></td><td class="ye"><input class="tin" aria-label="Plus T04" value="0"></td><td class="ye"><input class="tin" aria-label="Minus T04" value="0"></td><td class="wt"><input class="tin" aria-label="Drill T04" value="1600"></td><td class="wt"><input class="tin" aria-label="Des T04"></td><td></td></tr>
        <tr><td></td><td><button class="tbtn">Total</button></td><td class="num">277</td><td></td><td></td><td></td><td></td><td></td><td></td><td></td><td></td></tr>
      </tbody>
    </table>
  </div>
  <div class="scroll"><svg viewBox="0 0 12 11"><path fill="#54ceb0" stroke="#2e7561" d="M11 1v9L1 5.500z"/><path fill="none" stroke="#a8ecdc" stroke-width="1.500" d="M11 1L1 5.500"/></svg><span class="thumb"></span><span class="gap"></span><svg viewBox="0 0 12 11"><path fill="#54ceb0" stroke="#2e7561" d="M1 10V1l10 4.500z"/><path fill="none" stroke="#a8ecdc" stroke-width="1.500" d="M1 10V1l10 4.500"/></svg></div>
  <div class="nav">
    <span class="curtool">T02</span>
    <div class="cell n1"><button class="btn">First</button></div><div class="cell n2"><button class="btn">&lt;--</button></div><div class="cell n2"><button class="btn">--&gt;</button></div><div class="cell n3"><button class="btn">Last</button></div>
    <label class="index" for="idx">Index:</label><input id="idx" class="tin idx">
    <div class="cell n4"><button class="btn" aria-label="Highlight"><svg viewBox="0 0 16 16"><path fill="none" stroke="#000" d="M.5.5h15v15H.5zM6.500 11c0-2-2-3-2-5q.5-3 3.500-3t3.500 3c0 2-2 3-2 5zM6.500 13.500h3"/></svg></button></div>
    <div class="cell n4"><button class="btn" aria-label="Zoom to"><svg viewBox="0 0 16 16"><path fill="none" stroke="#000" d="M.5.5h15v15H.5zM4 3h7l-3 3h2q3 2 1 4M3 10l2 3 2-2 2 3 2-3 2 2"/></svg></button></div>
    <div class="cell n4"><button class="btn" aria-label="Delete"><svg viewBox="0 0 16 16"><path fill="none" stroke="#000" d="M.5.5h15v15H.5zM5 7q0-4 3-4t3 4l-2 3v4H7v-4z"/><path stroke="#e11" stroke-width="1.500" d="M2 3l12 10M14 3L2 13"/></svg></button></div>
    <div class="pcell mlmy"><span class="sel"><select aria-label="Units"><option>ml/my</option></select></span></div>
    <div class="pcell reg"><span class="sel"><select aria-label="Mode"><option>Regular</option></select></span></div>
  </div>
  <div class="mergebar">
    <div class="cell comb"><button class="btn">Combine Tools</button></div>
    <div class="pcell merge"><label for="mt">Merge Tools :</label><span class="sel"><select id="mt"><option>Update Tools Numbers</option></select></span><div class="mb"><button class="btn">Merge</button></div></div>
  </div>
  <div class="actions"><div class="cell"><button class="btn">Apply</button></div><div class="cell"><button class="btn">Calc Drills</button></div><div class="cell"><button class="btn">Update Table</button></div><div class="cell"><button class="btn">Close</button></div></div>
</section>

<div class="note" lang="zh">器件孔不要定义为过孔</div>
<div class="badge">67</div>

<footer class="taskbar">
  <div class="startcol">
    <button class="task start"><svg class="ico16" viewBox="0 0 16 16"><path fill="#e55a24" d="M2 3q3-2 5 0v5Q5 6 1 8z"/><path fill="#6fb52c" d="M8 3q3 2 6 0l-1 5q-3 2-5 0z"/><path fill="#3a7fd0" d="M1 9q4-2 6 0v5q-3-2-6 0z"/><path fill="#f4c21c" d="M8 9q3 2 5 0l-1 5q-2 2-4 0z"/></svg>开始</button>
    <svg class="clover" viewBox="0 0 18 18"><circle cx="5" cy="5" r="4.500" fill="#3b86d8"/><circle cx="13" cy="5" r="4.500" fill="#7ab83a"/><circle cx="5" cy="13" r="4.500" fill="#e0a022"/><circle cx="13" cy="13" r="4.500" fill="#d8472a"/></svg>
  </div>
  <div class="tasks">
    <div class="trow">
      <svg class="solo" viewBox="0 0 16 16"><path fill="#6cc04a" d="M3 3l7-2 4 3-7 2 4 3-3 2-7-4z"/><path fill="#3aa6dd" d="M6 7l7 3-4 5H2l5-4z"/></svg>
      <svg class="solo gap1" viewBox="0 0 16 16"><path fill="#c01818" d="M0 0h16v16H0z"/><path fill="none" stroke="#fff" stroke-width="1.500" d="M3 12q5-2 5-9-1 6 5 7-6-1-10 2"/></svg>
      <button class="task"><svg class="ico16" viewBox="0 0 16 16"><path fill="#eef4fb" stroke="#6b93bd" d="M2.500.5h11v15h-11z"/><path fill="#3f9bdc" d="M4 2h8v3H4z"/><path fill="#9bb" d="M4 7h2v2H4zM7 7h2v2H7zM10 7h2v2h-2zM4 10h2v2H4zM7 10h2v2H7z"/><path fill="#e93" d="M10 10h2v4h-2z"/></svg>计算器</button>
      <svg class="solo gap2" viewBox="0 0 16 16"><path fill="none" stroke="#55c043" stroke-width="3" d="M4 8.500h9Q13 3 8 3T3 8t5 5q3 0 4-2"/><path fill="none" stroke="#8fd67c" d="M1 13Q2 4 14 2"/></svg>
      <button class="task"><svg class="ico16" viewBox="0 0 16 16"><path fill="#1c2fa0" d="M0 1h16v15H0z"/><path fill="#fff" d="M3 9h10v7H3z"/><path fill="#d22" d="M4 0h8v6H4z"/><path stroke="#1c2fa0" d="M4 11.500h8M4 13.500h8"/></svg>[2] Total Commander ...</button>
      <button class="task"><svg class="ico16" viewBox="0 0 16 16"><path fill="#f4fbff" d="M2 0h12v16H2z"/><path stroke="#2a9fd6" stroke-width="2" d="M3 3h10M3 7h10M3 11h10M3 14h7"/></svg>制作规范 (Ver:1.0.6)</button>
      <button class="task"><svg class="ico16" viewBox="0 0 16 16"><path fill="#f0872a" d="M8 0l2.500 5 5.500.5-4 4 1 6-5-3-5 3 1-6-4-4L5.500 5z"/><circle cx="8" cy="8" r="2" fill="#fff"/></svg>兴森快捷衡阳分公司...</button>
      <button class="task"><svg class="ico16" viewBox="0 0 16 16"><path fill="#238a55" d="M4 2h8q3 2 1 6-3 3-6 3l1-3h2l1-3H7L4 14H1z"/></svg>工程系统&nbsp; 版本: 1....</button>
      <button class="task"><svg class="ico16"><use href="#gecko"/></svg>get.exe</button>
      <button class="task"><svg class="ico16"><use href="#xicon"/></svg>Engineering Toolkit 9....</button>
      <button class="task"><svg class="ico16"><use href="#xicon"/></svg>Progress</button>
    </div>
    <div class="trow second">
      <button class="task"><svg class="ico16"><use href="#xicon"/></svg>Dialog Box</button>
      <button class="task"><svg class="ico16"><use href="#xicon"/></svg>Graphic Editor 9.07b2 (0...</button>
      <button class="task cur"><svg class="ico16"><use href="#xicon"/></svg>Drill Tool Manager</button>
      <button class="task"><svg class="ico16" viewBox="0 0 16 16"><path fill="#bfe6ee" stroke="#6aa" d="M2.500 1.500h10l1 13h-10z"/><path stroke="#7bb" d="M4 5.500h8M4 8.500h8M4 11.500h8"/></svg>2v3di009a0.txt - 记事本</button>
      <button class="task"><svg class="ico16" viewBox="0 0 16 16"><path fill="#15589c" d="M0 0h16v16H0z"/><path fill="#fff" d="M5 3h9l-2 3H8l-1 2h4l-2 3H6l-2 3H2z"/></svg>左湘文</button>
      <button class="task"><svg class="ico16"><use href="#gecko"/></svg>CAM_Guide v2.82</button>
    </div>
  </div>
  <div class="lang"><svg viewBox="0 0 16 16"><path fill="#e8f2fc" stroke="#2a5f9e" stroke-width="2" d="M1 1h14v14H1z"/><path fill="none" stroke="#2a5f9e" stroke-width="1.500" d="M5 4h6v7H5zM9 9l3 4"/></svg><svg class="sm" viewBox="0 0 9 18"><path fill="none" stroke="#000" d="M2.500.5h6v4h-6zM.5 3.500h5v4h-5z"/><path d="M2 14h5l-2.500 3z"/></svg></div>
  <div class="tray">
    <svg class="icons" viewBox="0 0 64 48">
      <path fill="none" stroke="#000" stroke-width="1.300" d="M3 9l2.500-2.500L8 9M3 13l2.500-2.500L8 13"/>
      <path fill="#fff" stroke="#555" d="M20.500 3.500h9v13h-9zM25 8h9v5l-3 3h-3l-3-3zM27 5v3M32 5v3M29 16v4"/>
      <path fill="#fff" stroke="#777" d="M44.500 14.500h2v3h-2zM48.500 11.500h2v6h-2zM52.500 8.500h2v9h-2zM56.500 4.500h2v13h-2z"/>
      <path fill="#e22718" d="M34 26l-6 1q-7 4-7 10t6 5l8-1v-7l-5-1-2 2q-2-4 6-9z"/><path fill="#f8d98a" stroke="#b77" d="M27 36h8v6h-8z"/>
      <path fill="#eee" stroke="#777" d="M45 32h3l4-4v13l-4-4h-3zM54 31q2 3 0 7M56 29q4 5 0 11"/>
      <path fill="#2a9de8" d="M22 48l8-2 6 2z"/><path stroke="#d22" stroke-width="2" d="M48 48l6-3"/>
    </svg>
    <div class="time"><span>23:49</span><span>星期三</span><span>2017/4/12</span></div>
    <svg class="desk" viewBox="0 0 14 14"><path fill="#1c4fa0" stroke="#333" d="M.5.5h15v10H.5z"/><path fill="#222" d="M3 11h8v2H3z"/></svg>
  </div>
</footer>
</body>
</html>
```
FILE: styles.css
```css
:root {
  --teal: #54ceb0;
  --pale: #9bdbdb;
  --hi: #c2f4ee;
  --lo: #4d8787;
  --deep: #2f6a5a;
  --cream: #ffffcc;
  --amber: #ffc84d;
  --gray: #d4d0c8;
  --mono: "Liberation Mono", monospace;
  --ui: Roboto, "Noto Sans CJK SC", sans-serif;
}
*, *::after { box-sizing: border-box; }
body {
  margin: 0;
  height: 100vh;
  display: flex;
  flex-direction: column;
  overflow: hidden;
  background: #000;
  font: bold 15px/16px var(--mono);
  color: #000;
}
p, h1, h2 { margin: 0; font-size: inherit; font-weight: inherit; }
button, input, select { font: inherit; color: inherit; margin: 0; padding: 0; border-radius: 0; }
select { appearance: none; }
svg { display: block; }
.defs { position: absolute; width: 0; height: 0; }
.ico16 { width: 16px; height: 16px; flex: none; }

/* title bars */
.titlebar {
  display: flex;
  align-items: center;
  height: 20px;
  flex: none;
  padding: 0 2px 1px;
  font: 600 12px/18px "Open Sans", sans-serif;
  color: #d4d0c8;
}
.titlebar h1, .titlebar h2 { flex: 1; margin-left: 3px; white-space: nowrap; }
.idle { background: linear-gradient(90deg, #808080, #bebebe); }
.active { background: linear-gradient(90deg, #0a246a, #a6caf0); color: #fff; }
.wbtn {
  width: 16px;
  height: 14px;
  background: var(--gray);
  border: 1px solid;
  border-color: #fff #404040 #404040 #fff;
  display: grid;
  place-items: center;
}
.wbtn svg { width: 12px; height: 10px; }
.wbtn.last { margin-left: 2px; }

/* raised Motif controls */
.cell { border: 1px solid #000; background: var(--teal); padding: 2px; display: flex; }
.btn {
  flex: 1;
  border: 2px solid;
  border-color: var(--hi) var(--lo) var(--lo) var(--hi);
  background: var(--pale);
  display: flex;
  align-items: center;
  justify-content: center;
  white-space: nowrap;
}
.pcell { border: 1px solid #000; background: var(--pale); padding: 3px; display: flex; align-items: center; }
.tin {
  width: 100%;
  min-width: 0;
  border: 2px solid;
  border-color: var(--lo) var(--hi) var(--hi) var(--lo);
  background: repeating-linear-gradient(#000 0 1px, transparent 1px 2px) 4px 1px / 1px 15px no-repeat;
  padding: 0 0 6px 4px;
  outline: none;
  vertical-align: top;
}
.sel {
  position: relative;
  display: flex;
  border: 2px solid;
  border-color: var(--hi) var(--lo) var(--lo) var(--hi);
  background: inherit;
}
.sel select { flex: 1; width: 100%; border: 0; background: none; padding-left: 5px; outline: none; }
.sel::after {
  content: "";
  position: absolute;
  right: 5px;
  top: calc(50% - 3px);
  width: 12px;
  height: 7px;
  border: 2px solid;
  border-color: var(--hi) var(--lo) var(--lo) var(--hi);
  pointer-events: none;
}

/* main editor */
.editor { flex: 1; min-height: 0; display: flex; flex-direction: column; padding: 4px 0 4px 4px; background: var(--gray); border-bottom: 2px solid var(--deep); }
.editor > .titlebar { padding-right: 0; }
.head { display: flex; height: 56px; flex: none; border-top: 2px solid var(--lo); }
.menu {
  flex: 1;
  display: flex;
  align-items: center;
  gap: 17px;
  padding: 0 13px 3px;
  border: 2px solid;
  border-color: var(--hi) var(--lo) var(--lo) var(--hi);
  background: var(--pale);
  font: bold 15px/18px "Liberation Serif", serif;
}
.menu button { border: 0; background: none; }
.menu u { text-underline-offset: 3px; }
.menu .help { margin-left: auto; }
.brand {
  width: 411px;
  display: flex;
  gap: 4px;
  background: var(--pale);
  border: 2px solid;
  border-color: var(--hi) var(--pale) var(--hi) var(--lo);
  padding: 1px 0 0 5px;
}
.logo { flex: none; width: 160px; height: 44px; margin-top: 1px; font: italic bold 32px "Liberation Sans", sans-serif; }
.product { display: flex; flex-direction: column; align-items: center; font: 24px/28px "Liberation Serif", serif; white-space: nowrap; }
.product strong { line-height: 26px; }
.product em { font-size: 14px; font-weight: bold; line-height: 24px; }
.clock { flex: 1; display: flex; flex-direction: column; align-items: flex-end; font-style: italic; font-size: 14px; white-space: nowrap; padding-right: 1px; }
.clock .hour { padding-right: 12px; }
.pause { width: 10px; height: 9px; margin: 5px 18px 0 0; }

.work { flex: 1; min-height: 0; position: relative; display: flex; justify-content: space-between; background: #000; }
.board { position: absolute; inset: 0; width: 100%; height: 100%; }
.silk { fill: #e01212; font: 36px var(--mono); }
.silk .n { font-size: 32px; }
.silk .b { font-weight: bold; }
.silk .m { font-size: 54px; font-weight: bold; }
.silk .l { font-size: 62px; font-weight: bold; }

.side {
  position: relative;
  width: 155px;
  display: flex;
  flex-direction: column;
  background: var(--teal);
  border-right: 2px solid var(--hi);
  padding: 3px 0 2px 3px;
  font-size: 12px;
  line-height: 14px;
}
.jobinfo { font: bold 15px/17px var(--mono); white-space: nowrap; overflow: hidden; }
.jobinfo p { border: 1px solid #000; background: var(--pale); padding: 0 2px; height: 19px; }
.side .cell { height: 29px; margin-top: 2px; }
.side .matrix { justify-content: flex-start; padding: 0 2px; font-size: 15px; }
.layerbox { flex: 1; border-bottom: 2px solid var(--hi); border-top: 3px solid var(--deep); border-left: 3px solid var(--deep); margin: 0 0 3px -3px; }
.layers {
  width: 123px;
  margin: 2px 0 0 1px;
  padding: 1px 2px 10px 2px;
  border: 1px solid #000;
  box-shadow: 2px 2px var(--hi);
  display: flex;
  flex-direction: column;
  gap: 3px;
}
.group { background: #000; padding: 2px; display: flex; flex-direction: column; gap: 2px; }
.group label { display: grid; grid-template-columns: 14px 18px 1fr; height: 14px; align-items: center; }
.group input {
  appearance: none;
  width: 14px;
  height: 14px;
  background: #fff;
  border: 2px solid #fff;
  box-shadow: inset 0 0 0 2px #000;
}
.group .cur { border-color: #0000c8; }
.group span { background: var(--pale); padding-left: 1px; height: 14px; line-height: 14px; }
.w span { background: #fff !important; }
.g span { background: #00a57c !important; }
.o span { background: var(--amber) !important; }
.s span { background: #98b3bd !important; }
.l span { background: #dcdcdc !important; }
.dot { width: 14px; height: 14px; border-radius: 50%; margin-left: 2px; }
.r { background: #f00; }
.gr { background: #439800; }
.selected { border: 1px solid #000; background: var(--amber); padding: 2px 3px; height: 20px; }

.tools { position: relative; width: 160px; display: flex; flex-direction: column; }
.toolgrid {
  display: grid;
  grid-template-columns: repeat(4, 1fr);
  gap: 2px;
  padding: 3px 0 2px 2px;
  background: #0c2c26;
  border-left: 2px solid var(--deep);
  border-bottom: 3px solid var(--teal);
}
.toolgrid button, .toolcol button {
  height: 38px;
  border: 2px solid;
  border-color: var(--hi) var(--lo) var(--lo) var(--hi);
  background: var(--pale);
  display: grid;
  place-items: center;
}
.toolgrid svg, .toolcol svg { width: 30px; height: 30px; }
.toolgrid .hot { border: 3px solid #a81c1c; }
.toolcol { align-self: flex-end; width: 38px; display: grid; gap: 3px; background: #000; padding-top: 1px; }
.toolcol button { background: #c8c8c8; border-color: #eee #888 #888 #eee; }
.toolcol .wh { background: #fff; }
.toolcol .or { background: var(--amber); border-color: #ffe0a0 #a07820 #a07820 #ffe0a0; }
.corner { margin-top: auto; height: 46px; background: var(--teal); border-top: 2px solid var(--hi); border-bottom: 2px solid var(--hi); }

.cmd { height: 35px; flex: none; display: flex; padding: 2px 0 1px 2px; background: #000; font-size: 12px; gap: 1px; }
.cbtn {
  width: 30px;
  border: 3px solid var(--cream);
  background: var(--cream);
  display: grid;
  place-items: center;
  box-shadow: inset 0 0 0 1px #c0bd95;
}
.cbtn.on { border-color: #5fc0a6; }
.cbtn svg { width: 21px; height: 21px; }
.xy, .xyin, .msg { background: var(--cream); display: flex; align-items: center; }
.xy { width: 48px; padding-left: 3px; font-size: 12px; }
.xyin { width: 172px; padding: 2px; }
.xyin .tin { height: 28px; border-color: #9d9a78 #d9d6a8 #d9d6a8 #9d9a78; background-color: var(--cream); }
.msg { flex: 1; padding-left: 3px; }
.unit { width: 75px; background: var(--teal); margin-left: 1px; }
.status { height: 33px; flex: none; background: var(--hi); border: 1px solid #000; border-right: 0; border-top: 2px solid var(--lo); padding: 2px 2px 1px 3px; font-size: 12px; display: flex; }
.status p { flex: 1; background: #b5ffff; border: 2px solid; border-color: #d8ffff #5fa0a0 #5fa0a0 #d8ffff; box-shadow: 0 0 0 1px #333; display: flex; align-items: center; justify-content: center; }

/* floating windows */
.win { position: absolute; display: flex; flex-direction: column; background: var(--teal); border: 2px solid; border-color: #fff #5a5a5a #5a5a5a #fff; padding: 2px; box-shadow: inset 0 0 0 2px var(--gray); }
.win .titlebar { height: 19px; padding-bottom: 2px; }
.win .light { background: linear-gradient(90deg, #808080, #c0c0c0); }
.pop1 { left: 116px; top: 33px; width: 538px; }
.pop1 > .cell { height: 31px; padding-top: 3px; }
.popbody { display: flex; border-top: 3px solid var(--deep); border-left: 3px solid var(--deep); }
.view { flex: 1; min-width: 0; background: #000; height: 242px; border-right: 3px solid #a8ecdc; border-bottom: 2px solid #a8ecdc; }
.poptools { width: 36px; background: #000; display: flex; flex-direction: column; gap: 2px; padding: 0 1px 0 2px; }
.poptools button { height: 33px; border: 3px solid; border-color: #7ee0cc var(--lo) var(--lo) #7ee0cc; outline: 1px solid var(--teal); outline-offset: -1px; background: var(--pale); display: grid; place-items: center; }
.poptools svg { width: 21px; height: 21px; }
.big { fill: red; stroke: red; stroke-width: 4px; stroke-linejoin: round; font: 60px var(--mono); }
.pop2 { left: 1026px; top: 168px; width: 345px; }
.pop2 .view { height: 120px; }

.drill { left: 818px; top: 249px; width: 773px; height: 521px; }
.drill .titlebar { height: 20px; }
.frow { display: flex; height: 33px; }
.frow.r2 { height: 30px; }
.layer { width: 167px; }
.between { justify-content: space-between; padding: 0 12px 0 1px; }
.fld1 { width: 110px; padding: 2px; }
.fld1 .tin { height: 28px; }
.slots { width: 187px; margin-left: 149px; padding-left: 9px; gap: 8px; }
.slots .sel { flex: 1; height: 28px; }
.slots select { padding-left: 29px; }
.thick { width: 307px; padding-left: 1px; gap: 5px; }
.thick label { flex: none; padding-right: 9px; }
.thick .tin { width: 104px; height: 23px; padding-bottom: 2px; }
.params { width: 176px; }
.params .btn { justify-content: flex-start; padding-left: 2px; }
.fld2 { width: 129px; margin-left: 2px; padding: 2px; }
.fld2 .tin { height: 24px; padding-bottom: 3px; }

.tablebox { flex: 1; min-height: 0; margin: 0 3px 0 2px; border: 2px solid; border-color: var(--deep) #a8ecdc #a8ecdc var(--deep); overflow: hidden; }
table { border-collapse: collapse; table-layout: fixed; width: 100%; }
.c0 { width: 26px; } .c1 { width: 68px; } .c2 { width: 60px; } .c3 { width: 83px; } .c4 { width: 115px; } .c5 { width: 74px; }
th, td { border: 2px solid #000; padding: 0; }
th { background: #b5ffff; height: 38px; line-height: 15px; border-top-width: 1px; }
td { height: 33px; padding: 1px 2px; }
.ye { background: var(--cream); --hi: #cbc89e; --lo: #9d9a78; padding: 1px; }
.wt { background: #fff; --hi: #ccc; --lo: #999; padding: 1px; }
td .tin { display: block; height: 28px; }
td .sel { height: 28px; margin: 0 2px 0 3px; --hi: #cbc89e; }
.focus { outline: 3px solid #000; outline-offset: -2px; }
.focus .tin { background: none; }
.num { text-align: right; padding-right: 4px; }
.tbtn { width: 100%; height: 28px; display: block; text-align: left; padding-left: 1px; background: var(--teal); border: 2px solid; border-color: #a8ecdc #2e7561 #2e7561 #a8ecdc; }
.tbtn.cur { background: var(--amber); }
.mark {
  display: block;
  width: 20px;
  height: 20px;
  border: 1px solid #000;
  background: linear-gradient(#000, #000) 3px 10px / 12px 1px no-repeat, linear-gradient(#000, #000) 9px 4px / 1px 12px no-repeat, #fff;
  font: 8px/8px "Liberation Serif", serif;
  text-align: right;
}
.scroll { flex: none; height: 16px; margin: 4px 2px 4px 3px; display: flex; align-items: center; background: #43ac93; border: 2px solid; border-color: #2e7561 #a8ecdc #a8ecdc #2e7561; }
.scroll svg { width: 12px; height: 11px; }
.scroll .thumb { flex: 667; height: 12px; background: var(--teal); border: 2px solid; border-color: #a8ecdc #2e7561 #2e7561 #a8ecdc; }
.scroll .gap { flex: 65; }

.nav, .mergebar { display: flex; height: 35px; flex: none; border: 1px solid #000; margin-bottom: 2px; }
.nav .cell, .mergebar .cell, .nav .pcell { margin: 0 0 0 1px; border-width: 0 1px 0 0; }
.curtool { width: 41px; background: var(--amber); border-right: 1px solid #000; padding-left: 4px; display: flex; align-items: center; font-size: 12px; margin-right: 1px; }
.n1 { width: 58px; } .n2 { width: 34px; } .n3 { width: 50px; } .n4 { width: 29px; }
.n4 svg { width: 16px; height: 16px; }
.index { padding-left: 2px; align-self: center; width: 58px; }
.idx { flex: none; width: 60px; height: 29px; margin: 2px 4px 0 1px; padding-bottom: 8px; }
.nav .mlmy { margin-left: auto; width: 88px; border-left: 1px solid #000; padding: 2px 2px 2px 6px; }
.nav .reg { width: 115px; padding: 2px 2px 2px 5px; }
.nav .sel, .merge .sel { height: 29px; flex: 1; }
.nav .sel select, .merge select { padding-left: 4px; }
.mergebar { height: 34px; margin-bottom: 0; }
.mergebar .comb { margin-left: 214px; width: 131px; border-width: 0 1px; }
.merge { flex: 1; border: 0; padding: 0; }
.merge label { width: 145px; padding-left: 10px; }
.merge .mb { width: 61px; height: 100%; background: var(--teal); padding: 2px; display: flex; margin-left: 1px; }
.actions { display: grid; grid-template-columns: repeat(4, 1fr); height: 29px; flex: none; border: 1px solid #000; border-top: 0; }
.actions .cell { border-width: 0 1px 0 0; }

.note { position: absolute; left: 260px; top: 661px; width: 296px; height: 100px; padding-right: 4px; background: #fff; border: 3px solid #0000dc; text-align: center; font: 500 17px/26px "Noto Sans CJK SC", sans-serif; color: #dc1478; }
.badge { position: absolute; left: 1361px; top: -27px; width: 46px; height: 46px; border-radius: 50%; background: linear-gradient(#2fa84f, #49cf68); border: 2px solid #dfe8df; box-shadow: inset 0 0 0 1px #2e9a4c, 0 1px 3px #555; color: #fff; font: bold 12px/14px "Open Sans", sans-serif; text-align: center; padding-top: 25px; }

/* taskbar */
.taskbar { height: 57px; flex: none; display: flex; background: var(--gray); border-top: 1px solid #fff; font: 12px/16px var(--ui); }
.startcol { width: 108px; border-right: 1px solid #808080; padding: 3px 0 0 2px; margin-right: 8px; }
.clover { width: 18px; height: 18px; margin: 4px 0 0 64px; }
.task {
  width: 148px;
  height: 22px;
  display: flex;
  align-items: center;
  gap: 3px;
  padding: 0 3px;
  background: var(--gray);
  border: 1px solid;
  border-color: #fff #404040 #404040 #fff;
  box-shadow: inset -1px -1px #909090;
  white-space: nowrap;
  overflow: hidden;
}
.start { width: 47px; gap: 1px; padding: 0 1px; }
.tasks { flex: 1; padding-top: 3px; }
.trow { display: flex; gap: 2px; align-items: center; }
.trow .task { flex: none; }
.second { margin-top: 2px; gap: 0; }
.second .task { width: 161px; }
.task.cur { background: #fff; font: bold 11px/16px "Open Sans", sans-serif; border-color: #404040 #fff #fff #404040; box-shadow: none; }
.solo { width: 16px; height: 16px; flex: none; margin-left: 8px; }
.gap1 { margin: 0 8px 0 16px; }
.gap2 { margin: 0 7px; }
.lang { width: 28px; flex: none; border-left: 1px solid #808080; padding: 5px 0 0 8px; }
.lang svg { width: 16px; height: 16px; }
.lang .sm { width: 9px; height: 18px; margin: 6px 0 0 3px; }
.tray { width: 148px; flex: none; display: flex; border: 1px solid; border-color: #808080 transparent transparent #808080; margin-top: 3px; overflow: hidden; }
.icons { width: 64px; height: 48px; flex: none; margin-left: 2px; }
.time { flex: 1; display: flex; flex-direction: column; align-items: center; gap: 3px; padding-top: 7px; }
.desk { width: 14px; height: 14px; align-self: center; flex: none; margin-top: 18px; }
```
